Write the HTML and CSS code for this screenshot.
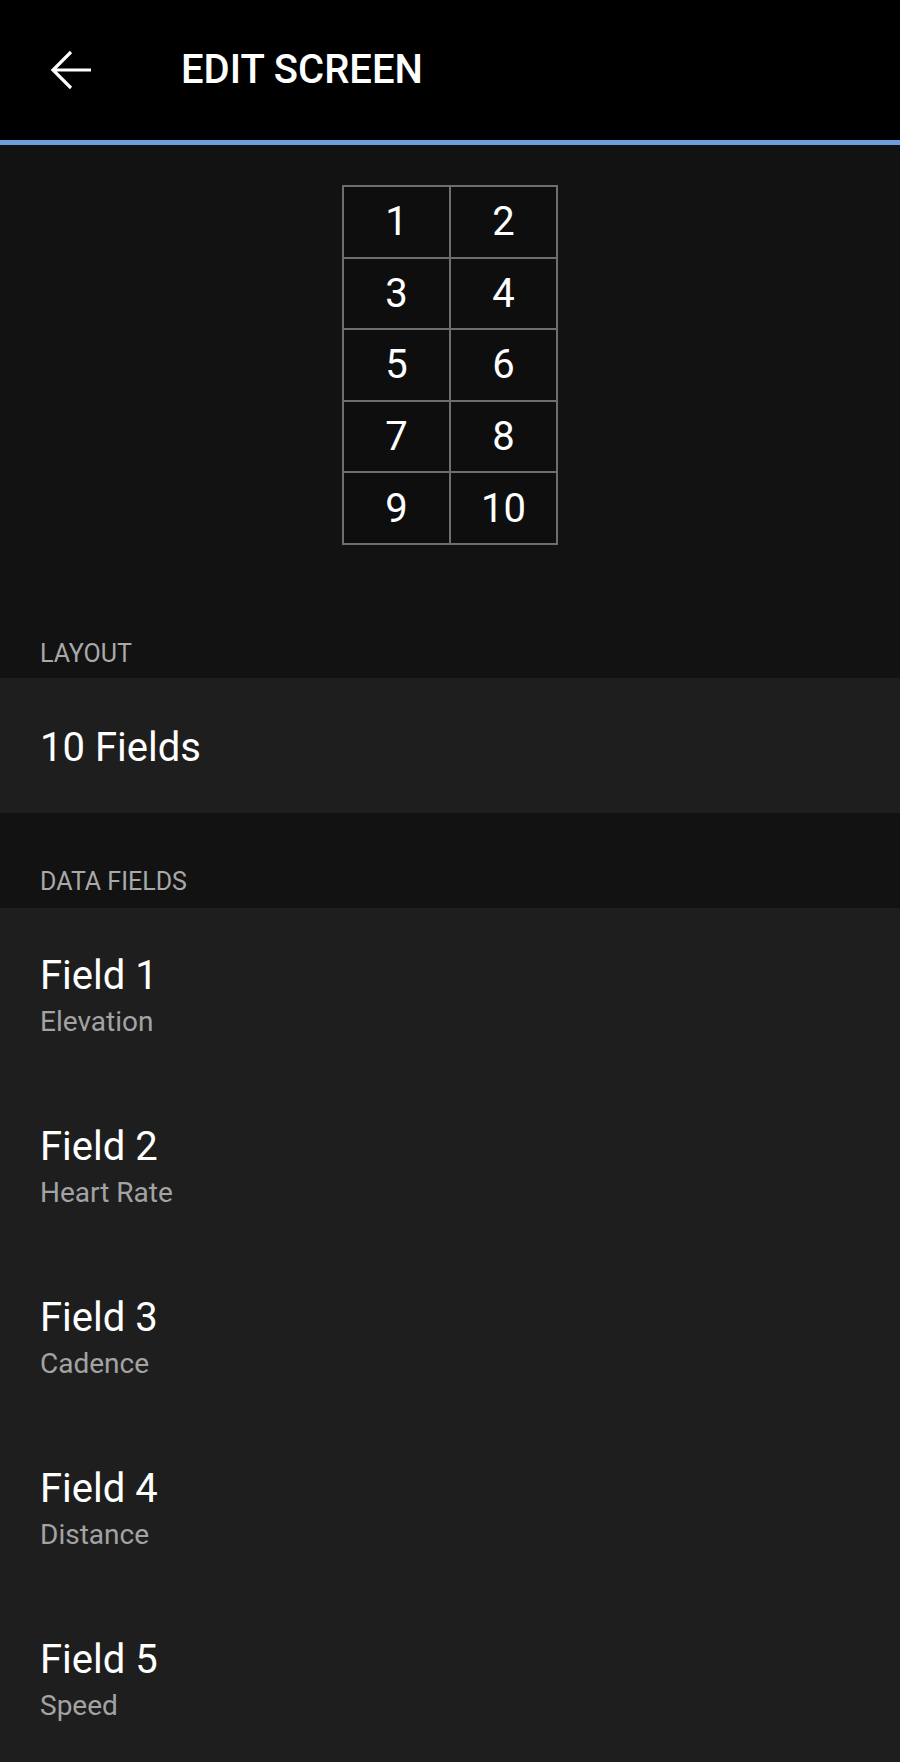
FILE: index.html
```html
<!DOCTYPE html>
<html lang="en">

<head>
    <meta charset="UTF-8">
    <meta name="viewport" content="width=device-width, initial-scale=1.0">
    <title>Edit Screen</title>
    <link rel="stylesheet" href="styles.css">
</head>

<body>
    <header class="top-bar">
        <svg class="back-icon" width="42" height="40" viewBox="0 0 42 40">
            <path d="M41 20H3M21 2L3 20L21 38" fill="none" stroke="#fff" stroke-width="3.2" />
        </svg>
        <h1>EDIT SCREEN</h1>
    </header>

    <!-- Screen preview -->
    <div class="preview">
        <div class="grid">
            <div class="cell">1</div>
            <div class="cell">2</div>
            <div class="cell">3</div>
            <div class="cell">4</div>
            <div class="cell">5</div>
            <div class="cell">6</div>
            <div class="cell">7</div>
            <div class="cell">8</div>
            <div class="cell">9</div>
            <div class="cell">10</div>
        </div>
    </div>

    <div class="section-label first">LAYOUT</div>
    <div class="layout-row">10 Fields</div>

    <div class="section-label">DATA FIELDS</div>
    <ul class="field-list">
        <li class="field">
            <span class="field-title">Field 1</span>
            <span class="field-value">Elevation</span>
        </li>
        <li class="field">
            <span class="field-title">Field 2</span>
            <span class="field-value">Heart Rate</span>
        </li>
        <li class="field">
            <span class="field-title">Field 3</span>
            <span class="field-value">Cadence</span>
        </li>
        <li class="field">
            <span class="field-title">Field 4</span>
            <span class="field-value">Distance</span>
        </li>
        <li class="field">
            <span class="field-title">Field 5</span>
            <span class="field-value">Speed</span>
        </li>
    </ul>
</body>

</html>
```

FILE: styles.css
```css
body {
    font-family: Roboto, 'Liberation Sans', sans-serif;
    background-color: #121212;
    color: #fff;
    margin: 0;
}

.top-bar {
    display: flex;
    align-items: center;
    height: 140px;
    background-color: #000;
    border-bottom: 5px solid #6a9fde;
}

.back-icon {
    margin-left: 50px;
    flex-shrink: 0;
}

.top-bar h1 {
    margin: 0 0 0 89px;
    font-size: 40px;
    font-weight: 500;
    line-height: 48px;
}

.preview {
    display: flex;
    justify-content: center;
    padding: 40px 0 95px;
}

.grid {
    display: grid;
    grid-template-columns: 105px 105px;
    grid-auto-rows: 69.6px;
    gap: 2px;
    border: 2px solid #6e6e6e;
    background-color: #6e6e6e;
}

.cell {
    display: flex;
    align-items: center;
    justify-content: center;
    background-color: #0e0e0e;
    font-size: 40px;
}

.section-label {
    font-size: 25px;
    line-height: 28px;
    color: #a9a9a9;
    padding: 55px 40px 12px;
}

.section-label.first {
    padding-top: 0;
    padding-bottom: 10px;
}

.layout-row {
    background-color: #1e1e1e;
    font-size: 40px;
    line-height: 48px;
    padding: 46px 40px 41px;
}

.field-list {
    list-style: none;
    margin: 0;
    padding: 0;
    background-color: #1e1e1e;
}

.field {
    display: flex;
    flex-direction: column;
    height: 171px;
    box-sizing: border-box;
    padding: 44px 40px 0;
}

.field-title {
    font-size: 40px;
    line-height: 48px;
}

.field-value {
    margin-top: 5px;
    font-size: 28px;
    line-height: 34px;
    color: #a3a3a3;
}
```
